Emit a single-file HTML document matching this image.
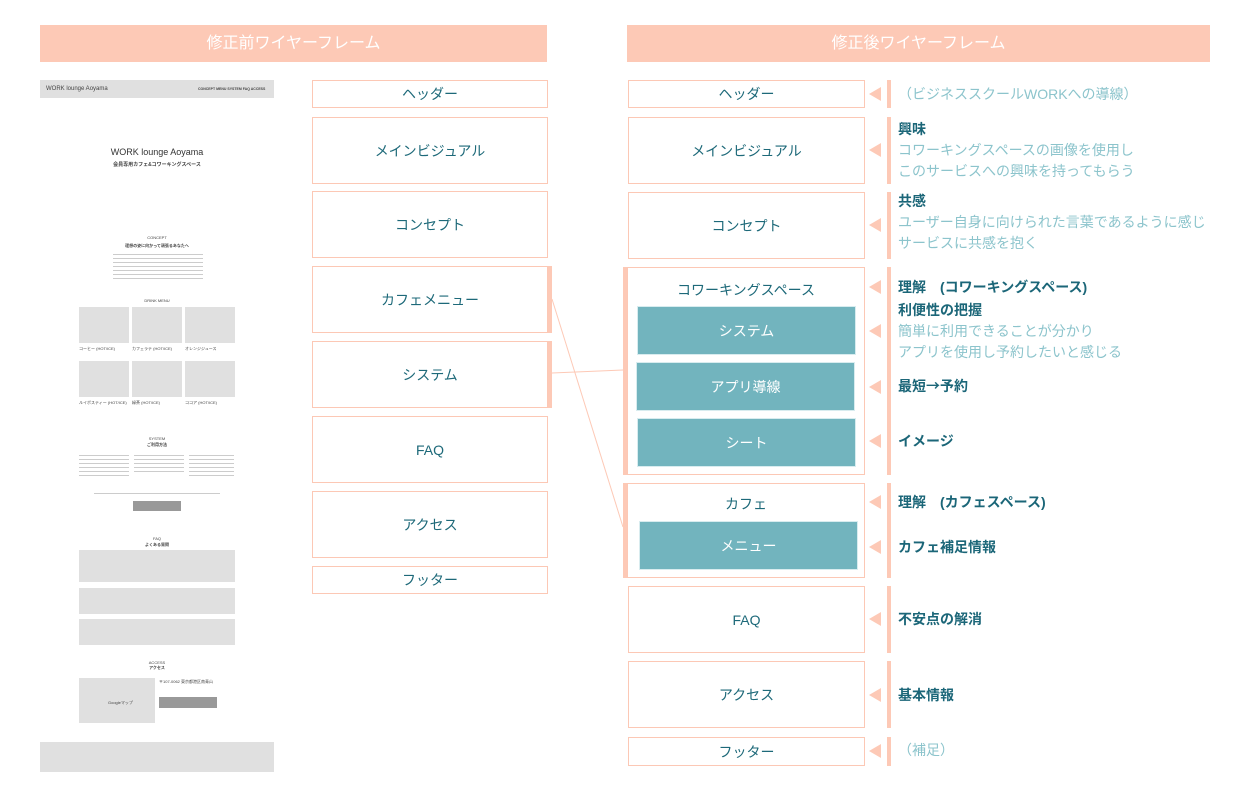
<!DOCTYPE html>
<html><head><meta charset="utf-8"><style>
*{margin:0;padding:0;box-sizing:border-box}
body{width:1250px;height:805px;background:#fff;position:relative;overflow:hidden;font-family:"Liberation Sans","Noto Sans CJK JP",sans-serif}
.a{position:absolute}
.hd{background:#fdc9b6;color:#fff;font-size:16px;text-align:center;line-height:37px;height:37px;top:25px}
.bx{position:absolute;border:1px solid #fcc8b5;background:#fff;color:#1d6979;font-size:14px;display:flex;align-items:center;justify-content:center}
.tl{position:absolute;background:#72b4be;color:#fff;font-size:14px;display:flex;align-items:center;justify-content:center;border:1px solid #d8ecef}
.bar{position:absolute;background:#fdc9b6}
.tri{position:absolute;width:0;height:0;border-top:7px solid transparent;border-bottom:7px solid transparent;border-right:12px solid #fdc9b6;left:869px}
.t{position:absolute;left:898px;font-size:14px;line-height:21px;color:#8cc4cc;white-space:nowrap}
.b{color:#1b6678;font-weight:bold}
.g{position:absolute;background:#e0e0e0}
.s{position:absolute;font-size:4px;color:#444;white-space:nowrap}
</style></head><body>
<div class="a hd" style="left:40px;width:507px">修正前ワイヤーフレーム</div>
<div class="a hd" style="left:627px;width:583px">修正後ワイヤーフレーム</div>

<!-- left wireframe -->
<div class="g" style="left:40px;top:80px;width:234px;height:18px"></div>
<div class="s" style="left:46px;top:86px;font-size:6px">WORK lounge Aoyama</div>
<div class="s" style="left:198px;top:87px;font-weight:bold;font-size:3.5px">CONCEPT MENU SYSTEM FAQ ACCESS</div>
<div class="s" style="left:40px;width:234px;text-align:center;top:147px;font-size:9px;color:#333">WORK lounge Aoyama</div>
<div class="s" style="left:40px;width:234px;text-align:center;top:161px;font-size:5px;font-weight:bold">会員専用カフェ&コワーキングスペース</div>
<div class="s" style="left:40px;width:234px;text-align:center;top:235px">CONCEPT</div>
<div class="s" style="left:40px;width:234px;text-align:center;top:243px;font-weight:bold">理想の姿に向かって頑張るあなたへ</div>
<div class="a" style="left:113px;top:252px;width:90px;height:28px;background:repeating-linear-gradient(#fff 0 2px,#ccc 2px 3px,#fff 3px 4px)"></div>
<div class="s" style="left:40px;width:234px;text-align:center;top:298px">DRINK MENU</div>
<div class="g" style="left:79px;top:307px;width:50px;height:36px"></div>
<div class="g" style="left:132px;top:307px;width:50px;height:36px"></div>
<div class="g" style="left:185px;top:307px;width:50px;height:36px"></div>
<div class="g" style="left:79px;top:361px;width:50px;height:36px"></div>
<div class="g" style="left:132px;top:361px;width:50px;height:36px"></div>
<div class="g" style="left:185px;top:361px;width:50px;height:36px"></div>
<div class="s" style="left:79px;top:346px">コーヒー (HOT/ICE)</div><div class="s" style="left:132px;top:346px">カフェラテ (HOT/ICE)</div><div class="s" style="left:185px;top:346px">オレンジジュース</div>
<div class="s" style="left:79px;top:400px">ルイボスティー (HOT/ICE)</div><div class="s" style="left:132px;top:400px">緑茶 (HOT/ICE)</div><div class="s" style="left:185px;top:400px">ココア (HOT/ICE)</div>
<div class="s" style="left:40px;width:234px;text-align:center;top:436px">SYSTEM</div>
<div class="s" style="left:40px;width:234px;text-align:center;top:442px;font-weight:bold">ご利用方法</div>
<div class="a" style="left:79px;top:453px;width:50px;height:25px;background:repeating-linear-gradient(#fff 0 2px,#ccc 2px 3px,#fff 3px 4px)"></div>
<div class="a" style="left:134px;top:453px;width:50px;height:20px;background:repeating-linear-gradient(#fff 0 2px,#ccc 2px 3px,#fff 3px 4px)"></div>
<div class="a" style="left:189px;top:453px;width:45px;height:25px;background:repeating-linear-gradient(#fff 0 2px,#ccc 2px 3px,#fff 3px 4px)"></div>
<div class="a" style="left:94px;top:493px;width:126px;height:1px;background:#ccc"></div>
<div class="a" style="left:133px;top:501px;width:48px;height:10px;background:#999"></div>
<div class="s" style="left:40px;width:234px;text-align:center;top:536px">FAQ</div>
<div class="s" style="left:40px;width:234px;text-align:center;top:542px;font-weight:bold">よくある質問</div>
<div class="g" style="left:79px;top:550px;width:156px;height:32px"></div>
<div class="g" style="left:79px;top:588px;width:156px;height:26px"></div>
<div class="g" style="left:79px;top:619px;width:156px;height:26px"></div>
<div class="s" style="left:40px;width:234px;text-align:center;top:660px">ACCESS</div>
<div class="s" style="left:40px;width:234px;text-align:center;top:665px;font-weight:bold">アクセス</div>
<div class="g" style="left:79px;top:678px;width:76px;height:45px"></div>
<div class="s" style="left:108px;top:700px">Googleマップ</div>
<div class="a" style="left:159px;top:697px;width:58px;height:11px;background:#999"></div>
<div class="s" style="left:159px;top:679px">〒107-0062 東京都港区南青山</div>
<div class="g" style="left:40px;top:742px;width:234px;height:30px"></div>

<!-- middle column -->
<div class="bx" style="left:312px;top:80px;width:236px;height:28px">ヘッダー</div>
<div class="bx" style="left:312px;top:117px;width:236px;height:67px">メインビジュアル</div>
<div class="bx" style="left:312px;top:191px;width:236px;height:67px">コンセプト</div>
<div class="bx" style="left:312px;top:266px;width:236px;height:67px">カフェメニュー</div>
<div class="bar" style="left:548px;top:266px;width:4px;height:67px"></div>
<div class="bx" style="left:312px;top:341px;width:236px;height:67px">システム</div>
<div class="bar" style="left:548px;top:341px;width:4px;height:67px"></div>
<div class="bx" style="left:312px;top:416px;width:236px;height:67px">FAQ</div>
<div class="bx" style="left:312px;top:491px;width:236px;height:67px">アクセス</div>
<div class="bx" style="left:312px;top:566px;width:236px;height:28px">フッター</div>

<svg class="a" style="left:0;top:0" width="1250" height="805"><g stroke="#fdc9b6" stroke-width="1"><line x1="552" y1="299" x2="623" y2="527"/><line x1="552" y1="373" x2="623" y2="370"/></g></svg>

<!-- right column -->
<div class="bx" style="left:628px;top:80px;width:237px;height:28px">ヘッダー</div>
<div class="bx" style="left:628px;top:117px;width:237px;height:67px">メインビジュアル</div>
<div class="bx" style="left:628px;top:192px;width:237px;height:67px">コンセプト</div>
<div class="bx" style="left:627px;top:267px;width:238px;height:208px;align-items:flex-start;padding-top:12px">コワーキングスペース</div>
<div class="bar" style="left:623px;top:267px;width:4px;height:208px"></div>
<div class="tl" style="left:637px;top:306px;width:219px;height:49px">システム</div>
<div class="tl" style="left:636px;top:362px;width:219px;height:49px">アプリ導線</div>
<div class="tl" style="left:637px;top:418px;width:219px;height:49px">シート</div>
<div class="bx" style="left:627px;top:483px;width:238px;height:95px;align-items:flex-start;padding-top:10px">カフェ</div>
<div class="bar" style="left:623px;top:483px;width:4px;height:95px"></div>
<div class="tl" style="left:639px;top:521px;width:219px;height:49px">メニュー</div>
<div class="bx" style="left:628px;top:586px;width:237px;height:67px">FAQ</div>
<div class="bx" style="left:628px;top:661px;width:237px;height:67px">アクセス</div>
<div class="bx" style="left:628px;top:737px;width:237px;height:29px">フッター</div>

<div class="bar" style="left:887px;top:80px;width:4px;height:28px"></div>
<div class="bar" style="left:887px;top:117px;width:4px;height:67px"></div>
<div class="bar" style="left:887px;top:192px;width:4px;height:67px"></div>
<div class="bar" style="left:887px;top:267px;width:4px;height:208px"></div>
<div class="bar" style="left:887px;top:483px;width:4px;height:95px"></div>
<div class="bar" style="left:887px;top:586px;width:4px;height:67px"></div>
<div class="bar" style="left:887px;top:661px;width:4px;height:67px"></div>
<div class="bar" style="left:887px;top:737px;width:4px;height:29px"></div>

<div class="tri" style="top:87px"></div>
<div class="tri" style="top:143px"></div>
<div class="tri" style="top:218px"></div>
<div class="tri" style="top:280px"></div>
<div class="tri" style="top:324px"></div>
<div class="tri" style="top:380px"></div>
<div class="tri" style="top:434px"></div>
<div class="tri" style="top:495px"></div>
<div class="tri" style="top:540px"></div>
<div class="tri" style="top:612px"></div>
<div class="tri" style="top:688px"></div>
<div class="tri" style="top:744px"></div>

<div class="t" style="top:84px">（ビジネススクールWORKへの導線）</div>
<div class="t" style="top:119px"><span class="b">興味</span><br>コワーキングスペースの画像を使用し<br>このサービスへの興味を持ってもらう</div>
<div class="t" style="top:191px"><span class="b">共感</span><br>ユーザー自身に向けられた言葉であるように感じ<br>サービスに共感を抱く</div>
<div class="t b" style="top:277px">理解　(コワーキングスペース)</div>
<div class="t" style="top:300px"><span class="b">利便性の把握</span><br>簡単に利用できることが分かり<br>アプリを使用し予約したいと感じる</div>
<div class="t b" style="top:376px">最短<span style="font-family:'Noto Sans CJK JP',sans-serif">→</span>予約</div>
<div class="t b" style="top:431px">イメージ</div>
<div class="t b" style="top:492px">理解　(カフェスペース)</div>
<div class="t b" style="top:537px">カフェ補足情報</div>
<div class="t b" style="top:609px">不安点の解消</div>
<div class="t b" style="top:685px">基本情報</div>
<div class="t" style="top:740px">（補足）</div>
</body></html>
